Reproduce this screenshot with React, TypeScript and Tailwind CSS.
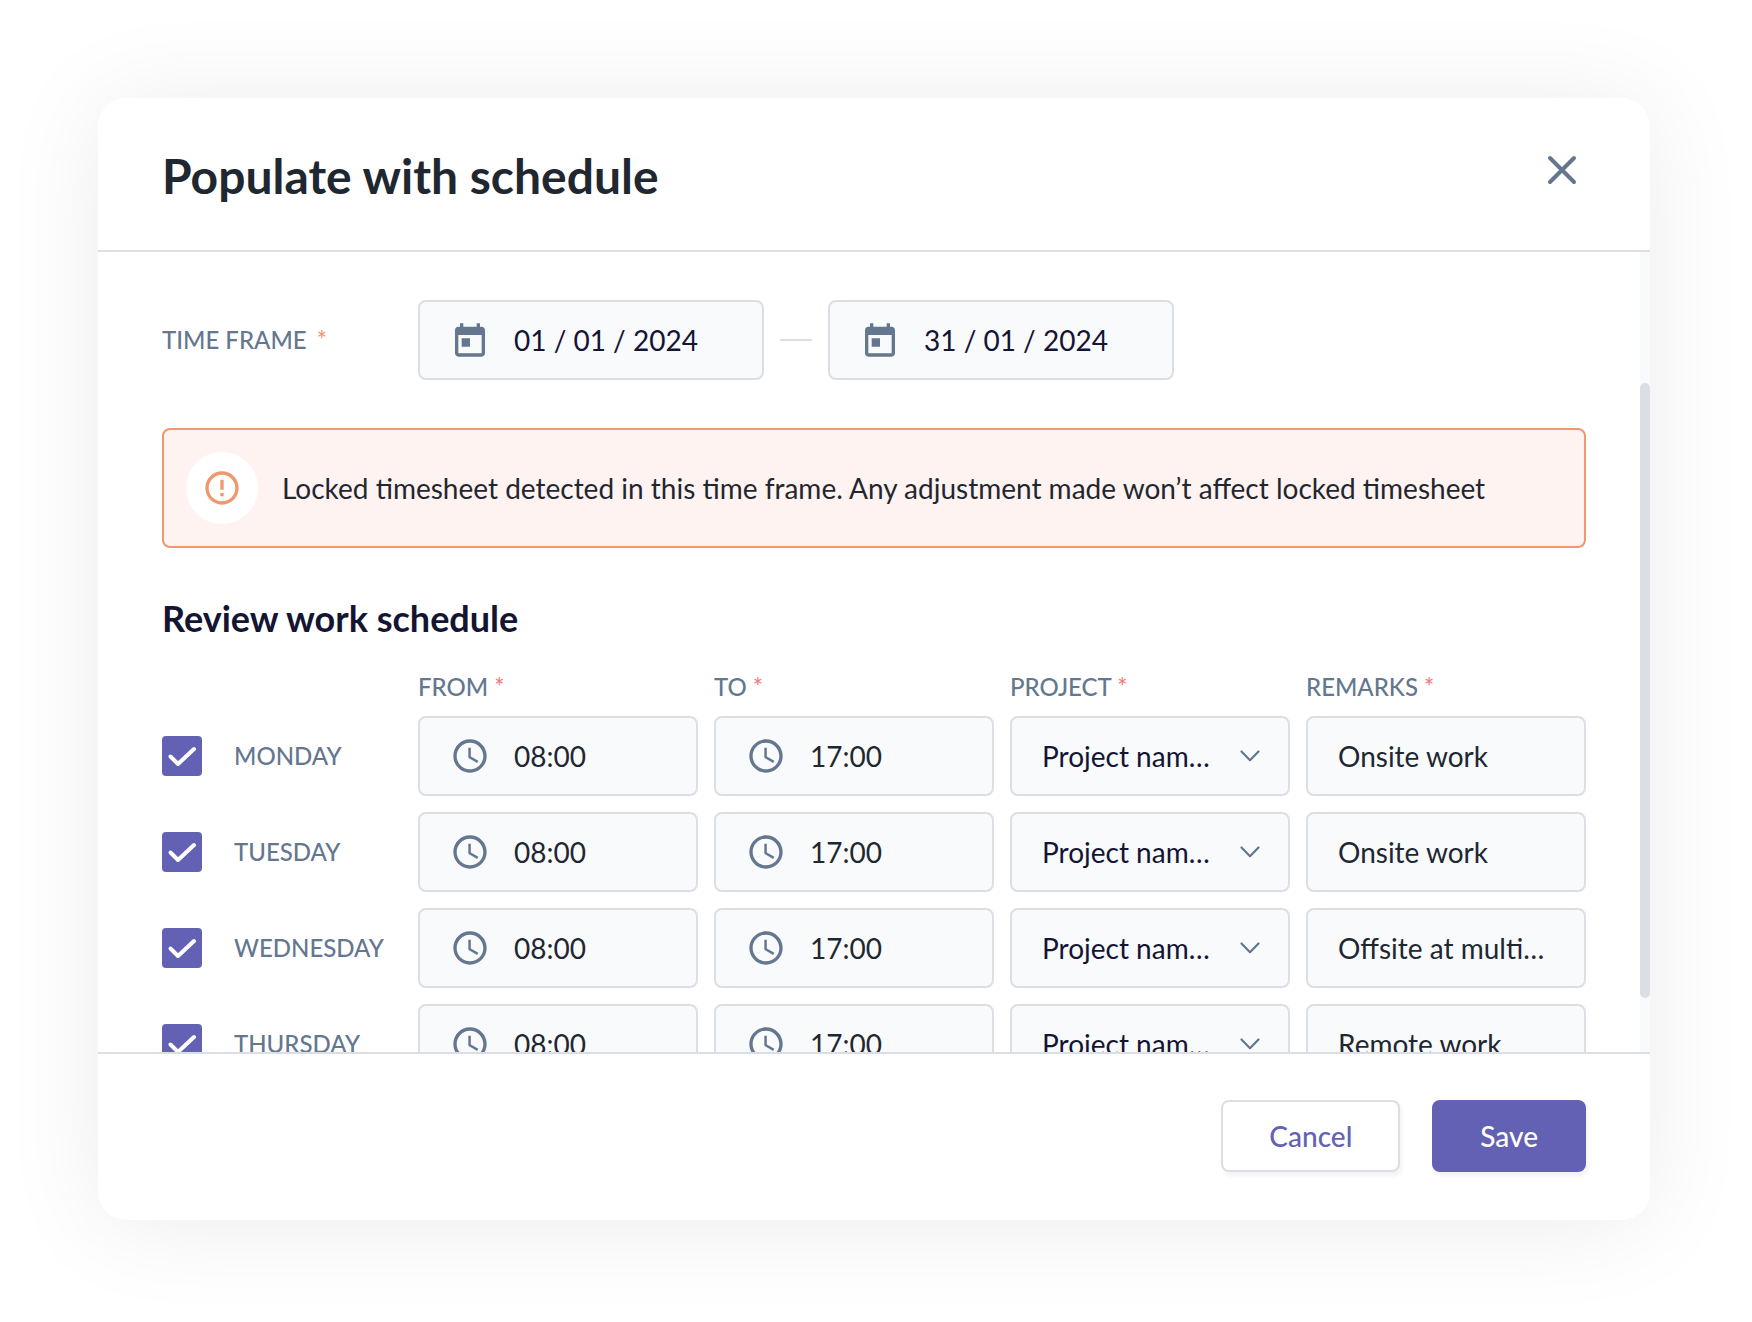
import React, { useState } from 'react';
import { clsx } from 'clsx';

const projects = ['Project name 01', 'Project name 02'];

const schedule = [
  { id: 'mon', day: 'Monday', from: '08:00', to: '17:00', remarks: 'Onsite work' },
  { id: 'tue', day: 'Tuesday', from: '08:00', to: '17:00', remarks: 'Onsite work' },
  { id: 'wed', day: 'Wednesday', from: '08:00', to: '17:00', remarks: 'Offsite at multiple sites' },
  { id: 'thu', day: 'Thursday', from: '08:00', to: '17:00', remarks: 'Remote work' },
];

const fieldBox = 'h-20 w-full rounded-lg border-2 border-[#dbdfe5] bg-[#f8fafc] text-[28px]';

function CalendarIcon() {
  return (
    <svg viewBox="0 -1 24 24" className="size-10 shrink-0 fill-[#64778f]" aria-hidden="true">
      <path d="M19 3h-1V1h-2v2H8V1H6v2H5c-1.11 0-1.99.9-1.99 2L3 19c0 1.1.89 2 2 2h14c1.1 0 2-.9 2-2V5c0-1.1-.9-2-2-2zm0 16H5V8h14v11zM7 10h5v5H7z" />
    </svg>
  );
}

function ClockIcon() {
  return (
    <svg viewBox="0 0 24 24" className="size-10 shrink-0 fill-[#64778f]" aria-hidden="true">
      <path d="M11.99 2C6.47 2 2 6.48 2 12s4.47 10 9.99 10C17.52 22 22 17.52 22 12S17.52 2 11.99 2zM12 20c-4.42 0-8-3.58-8-8s3.58-8 8-8 8 3.58 8 8-3.58 8-8 8zm.5-13H11v6l5.25 3.15.75-1.23-4.5-2.67z" />
    </svg>
  );
}

function Required({ className = 'text-[#f08080]' }: { className?: string }) {
  return <span className={className}>*</span>;
}

function IconInput({ icon, label, value, className }: {
  icon: React.ReactNode;
  label: string;
  value: string;
  className?: string;
}) {
  return (
    <label className={clsx(fieldBox, 'flex items-center gap-6 px-[30px]', className)}>
      {icon}
      <input type="text" aria-label={label} defaultValue={value} className="w-full min-w-0 bg-transparent outline-none" />
    </label>
  );
}

function ScheduleRow({ row }: { row: (typeof schedule)[number] }) {
  const [checked, setChecked] = useState(true);

  return (
    <tr>
      <th scope="row" className="pb-4 text-left font-medium">
        <label className="flex items-center gap-8 text-2xl text-[#64778f] uppercase">
          <span className="relative size-10 shrink-0">
            <input
              type="checkbox"
              checked={checked}
              onChange={(e) => setChecked(e.target.checked)}
              className="block size-10 appearance-none rounded border-2 border-[#dbdfe5] checked:border-[#6361b4] checked:bg-[#6361b4]"
            />
            {checked && (
              <svg viewBox="0 0 40 40" className="pointer-events-none absolute inset-0 size-10" aria-hidden="true">
                <path d="M8.5 20.5 16 28 32 13" fill="none" stroke="#fff" strokeWidth="4" strokeLinecap="round" strokeLinejoin="round" />
              </svg>
            )}
          </span>
          {row.day}
        </label>
      </th>
      <td className="pb-4 pl-4">
        <IconInput icon={<ClockIcon />} label={`${row.day} from`} value={row.from} className="text-[#1f2730]" />
      </td>
      <td className="pb-4 pl-4">
        <IconInput icon={<ClockIcon />} label={`${row.day} to`} value={row.to} className="text-[#1f2730]" />
      </td>
      <td className="pb-4 pl-4">
        <div className="relative">
          <select aria-label={`${row.day} project`} className={clsx(fieldBox, 'block appearance-none truncate pr-[72px] pl-[30px] text-[#141433]')}>
            {projects.map((name) => (
              <option key={name}>{name}</option>
            ))}
          </select>
          <svg viewBox="0 0 20 12" className="pointer-events-none absolute top-1/2 right-[30px] h-3 w-5 -translate-y-1/2" aria-hidden="true">
            <path d="M1.5 1.5 10 10.2 18.5 1.5" fill="none" stroke="#64778f" strokeWidth="2.2" strokeLinecap="round" strokeLinejoin="round" />
          </svg>
        </div>
      </td>
      <td className="pb-4 pl-4">
        <input
          type="text"
          aria-label={`${row.day} remarks`}
          defaultValue={row.remarks}
          className={clsx(fieldBox, 'block px-[30px] text-ellipsis text-[#1f2730]')}
        />
      </td>
    </tr>
  );
}

export default function App() {
  return (
    <div className="h-screen bg-white pt-[98px] pr-[102px] pb-[102px] pl-[98px] font-[Lato,sans-serif]">
      <div role="dialog" aria-labelledby="dialog-title" className="flex h-full flex-col overflow-hidden rounded-[28px] bg-white shadow-[0_4px_100px_rgba(0,0,0,0.08)]">
        <header className="flex items-start justify-between border-b-2 border-[#dbdfe5] px-16 pt-12 pb-11">
          <h1 id="dialog-title" className="text-5xl leading-[60px] font-bold text-[#1f2730]">Populate with schedule</h1>
          <button type="button" aria-label="Close" className="flex size-12 items-center justify-center">
            <svg viewBox="0 0 32 32" className="size-8" aria-hidden="true">
              <path d="M4 4 28 28M28 4 4 28" stroke="#64778f" strokeWidth="4" strokeLinecap="round" />
            </svg>
          </button>
        </header>

        <div className="flex min-h-0 flex-1">
          <main className="min-w-0 flex-1 overflow-y-auto pt-12 pr-[54px] pl-16 [scrollbar-width:none]">
            <div className="flex items-center">
              <span className="w-64 shrink-0 text-2xl font-medium text-[#64778f]">
                TIME FRAME <Required className="ml-1 text-[#f0976f]" />
              </span>
              <div className="flex items-center gap-4 text-[#141433]">
                <IconInput icon={<CalendarIcon />} label="Start date" value="01 / 01 / 2024" className="max-w-[346px]" />
                <span className="h-0.5 w-8 shrink-0 bg-[#dbdfe5]" />
                <IconInput icon={<CalendarIcon />} label="End date" value="31 / 01 / 2024" className="max-w-[346px]" />
              </div>
            </div>

            <div role="alert" className="mt-12 flex items-center gap-6 rounded-lg border-2 border-[#f0976f] bg-[#fff3f1] px-[22px] py-[22px]">
              <span className="flex size-[72px] shrink-0 items-center justify-center rounded-full bg-white">
                <svg viewBox="0 0 24 24" className="size-10 fill-[#f0976f]" aria-hidden="true">
                  <path d="M11 15h2v2h-2zm0-8h2v6h-2zm.99-5C6.47 2 2 6.48 2 12s4.47 10 9.99 10C17.52 22 22 17.52 22 12S17.52 2 11.99 2zM12 20c-4.42 0-8-3.58-8-8s3.58-8 8-8 8 3.58 8 8-3.58 8-8 8z" />
                </svg>
              </span>
              <p className="text-[28px] leading-10 text-[#1f2730]">
                Locked timesheet detected in this time frame. Any adjustment made won’t affect locked timesheet
              </p>
            </div>

            <h2 className="mt-12 text-4xl leading-11 font-bold text-[#141433]">Review work schedule</h2>

            <table className="mt-7 w-full table-fixed border-collapse">
              <colgroup>
                <col className="w-60" />
                <col />
                <col />
                <col />
                <col />
              </colgroup>
              <thead>
                <tr className="text-left text-2xl text-[#64778f]">
                  <td />
                  {['FROM', 'TO', 'PROJECT', 'REMARKS'].map((title) => (
                    <th key={title} scope="col" className="pt-[3px] pb-[13px] pl-4 font-medium">
                      {title} <Required />
                    </th>
                  ))}
                </tr>
              </thead>
              <tbody>
                {schedule.map((row) => (
                  <ScheduleRow key={row.id} row={row} />
                ))}
              </tbody>
            </table>
          </main>
          <div className="w-2.5 shrink-0 bg-[#f8fafc] pt-[131px]">
            <div className="h-[615px] rounded-full bg-[#dbdfe5]" />
          </div>
        </div>

        <footer className="flex justify-end gap-8 border-t-2 border-[#dbdfe5] px-16 pt-[46px] pb-12 text-[28px] font-medium">
          <button type="button" className="h-[72px] rounded-lg border-2 border-[#dbdfe5] bg-white px-[46px] text-[#6361b4] shadow-[2px_4px_4px_rgba(20,20,51,0.05)]">
            Cancel
          </button>
          <button type="button" className="h-[72px] rounded-lg bg-[#6361b4] px-12 text-white shadow-[2px_4px_4px_rgba(20,20,51,0.05)]">
            Save
          </button>
        </footer>
      </div>
    </div>
  );
}
